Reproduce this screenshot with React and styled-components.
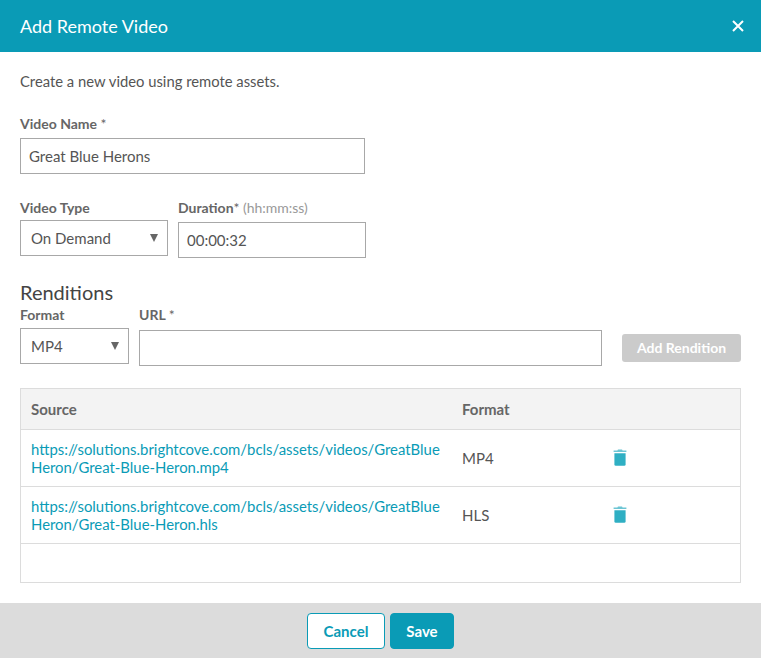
import React from 'react'
import styled, { createGlobalStyle } from 'styled-components'

const GlobalStyle = createGlobalStyle`
  html, body {
    margin: 0;
    padding: 0;
    background: #fff;
  }
  body {
    font-family: Lato, "Open Sans", sans-serif;
    color: #555;
    font-size: 14px;
  }
  * {
    box-sizing: border-box;
  }
`

const Modal = styled.div`
  width: 761px;
  height: 658px;
  display: flex;
  flex-direction: column;
  background: #fff;
  overflow: hidden;
`

const Header = styled.header`
  height: 52px;
  flex: none;
  display: flex;
  align-items: center;
  justify-content: space-between;
  padding: 0 17px 0 20px;
  background: #0a9bb6;
  color: #fff;
`

const Title = styled.h1`
  margin: 0;
  font-size: 18px;
  font-weight: 400;
`

const CloseButton = styled.button`
  display: flex;
  padding: 0;
  border: 0;
  background: none;
  cursor: pointer;
`

const Body = styled.main`
  flex: 1;
  padding: 20px 20px 0;
`

const Intro = styled.p`
  margin: 0 0 25px;
  font-size: 14.8px;
  line-height: 18px;
  color: #555;
`

const Row = styled.div`
  display: flex;
  align-items: flex-start;
  gap: ${props => props.gap || 10}px;
  margin-bottom: ${props => props.mb || 0}px;
`

const Field = styled.div`
  display: flex;
  flex-direction: column;
  width: ${props => props.width}px;
`

const Label = styled.label`
  height: ${props => props.h || 18}px;
  font-size: 14px;
  line-height: 18px;
  font-weight: 700;
  color: #666;
  white-space: nowrap;
`

const Star = styled.span`
  font-weight: 400;
`

const Hint = styled.span`
  font-size: 14px;
  font-weight: 400;
  color: #999;
`

const Input = styled.input`
  width: 100%;
  height: 36px;
  padding: 0 8px;
  border: 1px solid #a8a8a8;
  border-radius: 0;
  outline: none;
  background: #fff;
  font-family: inherit;
  font-size: 15px;
  color: #555;
`

const SelectWrap = styled.div`
  position: relative;
  height: 36px;

  &::after {
    content: '';
    position: absolute;
    top: 14px;
    right: 10px;
    border-left: 4px solid transparent;
    border-right: 4px solid transparent;
    border-top: 8px solid #666;
    pointer-events: none;
  }
`

const Select = styled.select`
  width: 100%;
  height: 36px;
  padding: 0 10px;
  border: 1px solid #a8a8a8;
  border-radius: 0;
  outline: none;
  appearance: none;
  background: #fff;
  font-family: inherit;
  font-size: 15px;
  color: #555;
`

const SectionTitle = styled.h2`
  margin: 0 0 2px;
  font-size: 20px;
  line-height: 24px;
  font-weight: 400;
  color: #444;
`

const AddButton = styled.button`
  flex: none;
  width: 119px;
  height: 28px;
  margin: 28px 0 0 10px;
  padding: 0 0 2px;
  border: 0;
  border-radius: 3px;
  background: #cbcbcb;
  color: #fff;
  font-family: inherit;
  font-size: 14px;
  font-weight: 700;
`

const Table = styled.table`
  width: 721px;
  height: 195px;
  border-collapse: separate;
  border-spacing: 0;
  table-layout: fixed;
  border: 1px solid #dcdcdc;
  font-size: 15px;
`

const HeadCell = styled.th`
  height: 41px;
  width: ${props => props.width}px;
  padding: 0 10px;
  background: #f3f3f3;
  border-bottom: 1px solid #dcdcdc;
  text-align: left;
  font-size: 15px;
  font-weight: 700;
  color: #666;
`

const Cell = styled.td`
  height: ${props => props.h || 57}px;
  padding: 0 10px 0 ${props => props.pl || 10}px;
  border-bottom: ${props => (props.$last ? '0' : '1px solid #dcdcdc')};
  line-height: 18px;
  vertical-align: middle;
`

const SourceLink = styled.a`
  display: block;
  color: #0a9bb6;
  font-size: 14.9px;
  text-decoration: none;
  word-break: break-all;
`

const IconButton = styled.button`
  display: flex;
  padding: 0 0 2px;
  border: 0;
  background: none;
  cursor: pointer;
`

const Footer = styled.footer`
  height: 55px;
  flex: none;
  display: flex;
  justify-content: center;
  align-items: center;
  gap: 5px;
  background: #dcdcdc;
`

const Button = styled.button`
  height: 36px;
  width: ${props => props.width}px;
  border: 1px solid #0a9bb6;
  border-radius: 4px;
  background: ${props => (props.$primary ? '#0a9bb6' : '#fff')};
  color: ${props => (props.$primary ? '#fff' : '#0a9bb6')};
  font-family: inherit;
  font-size: 15px;
  font-weight: 700;
  cursor: pointer;
`

const CloseIcon = () => (
  <svg width="12" height="12" viewBox="0 0 12 12">
    <path d="M1 1L11 11M11 1L1 11" stroke="#fff" strokeWidth="2" fill="none" />
  </svg>
)

const TrashIcon = () => (
  <svg width="14" height="17" viewBox="0 0 14 17">
    <path d="M5 0.5h4l0.6 1H13.4v1.6H0.6V1.5H4.4z" fill="#6cc5d4" />
    <path d="M1.4 4.2h11.2v11.2a1.4 1.4 0 0 1-1.4 1.4H2.8a1.4 1.4 0 0 1-1.4-1.4z" fill="#2fafc3" />
  </svg>
)

const renditions = [
  {
    url: 'https://solutions.brightcove.com/bcls/assets/videos/GreatBlueHeron/Great-Blue-Heron.mp4',
    format: 'MP4',
  },
  {
    url: 'https://solutions.brightcove.com/bcls/assets/videos/GreatBlueHeron/Great-Blue-Heron.hls',
    format: 'HLS',
  },
]

function App() {
  return (
    <Modal>
      <GlobalStyle />
      <Header>
        <Title>Add Remote Video</Title>
        <CloseButton aria-label="Close"><CloseIcon /></CloseButton>
      </Header>
      <Body>
        <Intro>Create a new video using remote assets.</Intro>
        <Row mb={25}>
          <Field width={345}>
            <Label h={23}>Video Name <Star>*</Star></Label>
            <Input defaultValue="Great Blue Herons" />
          </Field>
        </Row>
        <Row mb={22}>
          <Field width={148}>
            <Label h={21}>Video Type</Label>
            <SelectWrap>
              <Select defaultValue="On Demand">
                <option>On Demand</option>
                <option>Live</option>
              </Select>
            </SelectWrap>
          </Field>
          <Field width={188}>
            <Label h={23}>Duration<Star>*</Star> <Hint>(hh:mm:ss)</Hint></Label>
            <Input defaultValue="00:00:32" />
          </Field>
        </Row>
        <SectionTitle>Renditions</SectionTitle>
        <Row mb={22}>
          <Field width={109}>
            <Label h={22}>Format</Label>
            <SelectWrap>
              <Select defaultValue="MP4">
                <option>MP4</option>
                <option>HLS</option>
              </Select>
            </SelectWrap>
          </Field>
          <Field width={463}>
            <Label h={24}>URL <Star>*</Star></Label>
            <Input />
          </Field>
          <AddButton>Add Rendition</AddButton>
        </Row>
        <Table>
          <thead>
            <tr>
              <HeadCell width={431}>Source</HeadCell>
              <HeadCell width={150}>Format</HeadCell>
              <HeadCell width={138} />
            </tr>
          </thead>
          <tbody>
            {renditions.map(item => (
              <tr key={item.format}>
                <Cell><SourceLink href="#">{item.url}</SourceLink></Cell>
                <Cell>{item.format}</Cell>
                <Cell pl={11}><IconButton aria-label="Delete"><TrashIcon /></IconButton></Cell>
              </tr>
            ))}
            <tr>
              <Cell h={38} $last />
              <Cell h={38} $last />
              <Cell h={38} $last />
            </tr>
          </tbody>
        </Table>
      </Body>
      <Footer>
        <Button width={78}>Cancel</Button>
        <Button width={64} $primary>Save</Button>
      </Footer>
    </Modal>
  )
}

export default App
